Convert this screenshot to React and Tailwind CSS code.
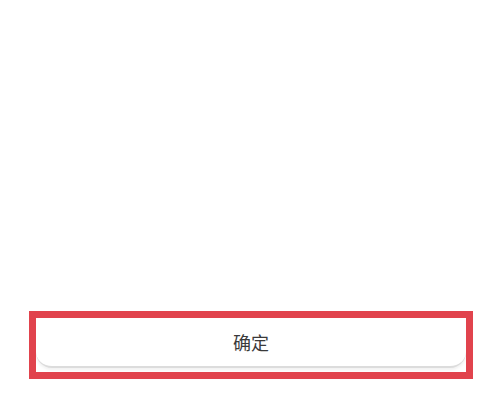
export default function App() {
  return (
    <div
      className="w-[497px] h-[394px] bg-white flex flex-col"
      style={{ fontFamily: '"Noto Sans CJK SC", "Noto Sans", sans-serif' }}
    >
      <div className="flex-1" />
      <div className="ml-[29px] mb-[15px] w-[444px] h-[68px] border-[7px] border-[#e1434d] bg-white overflow-hidden">
        <button className="w-full h-[50px] bg-white rounded-b-[16px] border-b-2 border-[#dcdcdc] flex items-center justify-center text-[18px] text-[#3a3a3a] shadow-[0_2px_3px_rgba(0,0,0,0.06)]">
          确定
        </button>
      </div>
    </div>
  );
}
